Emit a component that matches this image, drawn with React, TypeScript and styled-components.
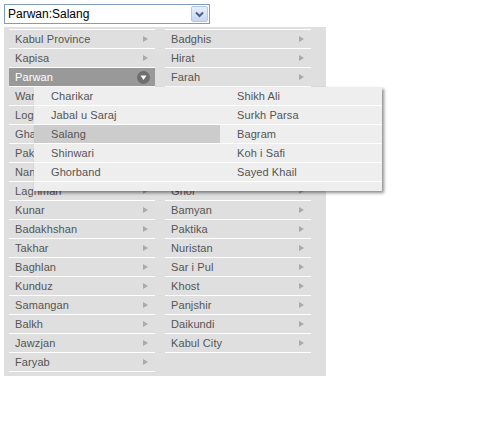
import React from "react";
import styled, { createGlobalStyle } from "styled-components";

const Global = createGlobalStyle`
  html, body { margin: 0; padding: 0; background: #ffffff; }
  body { font-family: "Liberation Sans", Arial, sans-serif; }
`;

const Page = styled.div`
  padding: 4px;
  width: 479px;
  height: 418px;
`;

const SelectBox = styled.div`
  box-sizing: border-box;
  width: 206px;
  height: 20px;
  border: 1px solid #7f9db9;
  background: #fff;
  display: flex;
  align-items: center;
  justify-content: space-between;
  padding: 0 1px 0 3px;
  font-size: 12px;
  color: #000;
`;

const DropButton = styled.div`
  box-sizing: border-box;
  width: 17px;
  height: 16px;
  border: 1px solid #b9c9dd;
  border-radius: 2px;
  background: linear-gradient(#e6eefc, #c8d6ee);
  display: flex;
  align-items: center;
  justify-content: center;
`;

const Panel = styled.div`
  position: relative;
  box-sizing: border-box;
  margin-top: 3px;
  width: 322px;
  height: 349px;
  background: #dfdfdf;
  padding: 2px 15px 0 5px;
  display: grid;
  grid-template-columns: 146px 146px;
  column-gap: 10px;
  align-items: start;
`;

const Column = styled.div`
  border-top: 1px solid #ffffff;
`;

const Row = styled.div<{ $active?: boolean }>`
  box-sizing: border-box;
  height: 19px;
  border-bottom: 1px solid #ffffff;
  display: flex;
  align-items: center;
  justify-content: space-between;
  padding: 0 5px 0 6px;
  font-size: 11px;
  letter-spacing: 0.1px;
  color: ${(p) => (p.$active ? "#ffffff" : "#555555")};
  background: ${(p) => (p.$active ? "#999999" : "transparent")};
`;

const Arrow = styled.span`
  width: 0;
  height: 0;
  border-top: 3px solid transparent;
  border-bottom: 3px solid transparent;
  border-left: 5px solid #aaaaaa;
  margin-right: 2px;
`;

const Popup = styled.div`
  position: absolute;
  left: 30px;
  top: 60px;
  width: 348px;
  box-sizing: border-box;
  background: #eeeeee;
  padding-bottom: 9px;
  box-shadow: 2px 2px 3px rgba(0, 0, 0, 0.45);
  display: grid;
  grid-template-columns: 186px 1fr;
  grid-auto-flow: column;
  grid-template-rows: repeat(5, 19px);
`;

const PopItem = styled.div<{ $active?: boolean }>`
  box-sizing: border-box;
  height: 19px;
  border-bottom: 1px solid #ffffff;
  display: flex;
  align-items: center;
  padding-left: 17px;
  font-size: 11px;
  letter-spacing: 0.1px;
  color: #555555;
  background: ${(p) => (p.$active ? "#cccccc" : "transparent")};
`;

const left = [
  "Kabul Province", "Kapisa", "Parwan", "Wardak", "Logar", "Ghazni", "Paktia",
  "Nangarhar", "Laghman", "Kunar", "Badakhshan", "Takhar", "Baghlan", "Kunduz",
  "Samangan", "Balkh", "Jawzjan", "Faryab",
];
const right = [
  "Badghis", "Hirat", "Farah", "Nimroz", "Helmand", "Kandahar", "Zabul",
  "Uruzgan", "Ghor", "Bamyan", "Paktika", "Nuristan", "Sar i Pul", "Khost",
  "Panjshir", "Daikundi", "Kabul City",
];
const popLeft = ["Charikar", "Jabal u Saraj", "Salang", "Shinwari", "Ghorband"];
const popRight = ["Shikh Ali", "Surkh Parsa", "Bagram", "Koh i Safi", "Sayed Khail"];

const OpenIcon = () => (
  <svg width="13" height="13" viewBox="0 0 13 13">
    <circle cx="6.5" cy="6.5" r="6.5" fill="#6e6e6e" />
    <path d="M3.5 4.5 H9.5 L6.5 9 Z" fill="#ffffff" />
  </svg>
);

const Chevron = () => (
  <svg width="9" height="7" viewBox="0 0 9 7">
    <path d="M1 1.5 L4.5 5 L8 1.5" stroke="#4d6185" strokeWidth="2" fill="none" />
  </svg>
);

export default function App() {
  return (
    <Page>
      <Global />
      <SelectBox>
        <span>Parwan:Salang</span>
        <DropButton>
          <Chevron />
        </DropButton>
      </SelectBox>
      <Panel>
        <Column>
          {left.map((n) => (
            <Row key={n} $active={n === "Parwan"}>
              <span>{n}</span>
              {n === "Parwan" ? <OpenIcon /> : <Arrow />}
            </Row>
          ))}
        </Column>
        <Column>
          {right.map((n) => (
            <Row key={n}>
              <span>{n}</span>
              <Arrow />
            </Row>
          ))}
        </Column>
        <Popup>
          {popLeft.map((n) => (
            <PopItem key={n} $active={n === "Salang"}>{n}</PopItem>
          ))}
          {popRight.map((n) => (
            <PopItem key={n}>{n}</PopItem>
          ))}
        </Popup>
      </Panel>
    </Page>
  );
}
